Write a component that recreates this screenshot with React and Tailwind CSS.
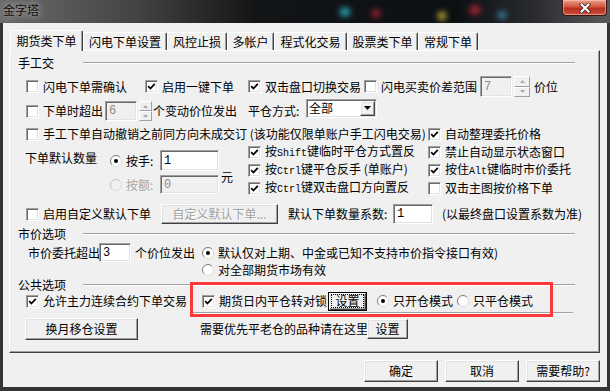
import React from "react";

const mono = "font-['Liberation_Mono',monospace] text-[10px]";
const sunken =
  "border border-t-[#a0a0a0] border-l-[#a0a0a0] border-r-white border-b-white shadow-[inset_1px_1px_0_#696969,inset_-1px_-1px_0_#e3e3e3]";
const raised =
  "border border-t-white border-l-white border-r-[#404040] border-b-[#404040] bg-[#f0f0f0] shadow-[inset_-1px_-1px_0_#a0a0a0,inset_1px_1px_0_#e3e3e3]";

function Box({ checked }) {
  return (
    <span className={`flex h-[13px] w-[13px] shrink-0 items-center justify-center bg-white ${sunken}`}>
      {checked && (
        <svg width="9" height="9" viewBox="0 0 9 9">
          <path d="M1.2 4.2 L3.4 6.5 L7.8 1.8" fill="none" stroke="#000" strokeWidth="1.8" />
        </svg>
      )}
    </span>
  );
}

function Check({ checked, children, className = "" }) {
  return (
    <div className={`flex shrink-0 items-center gap-[4px] whitespace-nowrap ${className}`}>
      <Box checked={checked} />
      <span>{children}</span>
    </div>
  );
}

function Dot({ checked, disabled }) {
  return (
    <svg width="12" height="12" viewBox="0 0 12 12" className="shrink-0">
      <circle cx="6" cy="6" r="5.5" fill={disabled ? "#f0f0f0" : "#fff"} />
      <path d="M2.1 9.9 A5.5 5.5 0 0 1 9.9 2.1" fill="none" stroke={disabled ? "#c4c4c4" : "#7a7a7a"} strokeWidth="1" />
      <path d="M9.9 2.1 A5.5 5.5 0 0 1 2.1 9.9" fill="none" stroke="#dcdcdc" strokeWidth="1" />
      {checked && <circle cx="6" cy="6" r="2" fill="#000" />}
    </svg>
  );
}

function Radio({ checked, children, className = "" }) {
  return (
    <div className={`flex shrink-0 items-center gap-[4px] whitespace-nowrap ${className}`}>
      <Dot checked={checked} />
      <span>{children}</span>
    </div>
  );
}

function Field({ value, disabled, className = "" }) {
  return (
    <div
      className={`flex shrink-0 items-center pl-[3px] font-['Liberation_Mono',monospace] text-[12px] ${sunken} ${
        disabled ? "bg-[#f0f0f0] text-[#8a8a8a]" : "bg-white text-black"
      } ${className}`}
    >
      {value}
    </div>
  );
}

function SpinHalf({ up }) {
  return (
    <div className="flex flex-1 items-center justify-center border border-t-white border-l-white border-r-[#a0a0a0] border-b-[#a0a0a0] bg-[#f0f0f0]">
      <svg width="5" height="3" viewBox="0 0 5 3">
        <path d={up ? "M0 3 L2.5 0 L5 3Z" : "M0 0 L2.5 3 L5 0Z"} fill="#a8a8a8" />
      </svg>
    </div>
  );
}

function Spin({ className = "" }) {
  return (
    <div className={`flex shrink-0 flex-col ${className}`}>
      <SpinHalf up />
      <SpinHalf />
    </div>
  );
}

function Button({ children, className = "", disabled }) {
  return (
    <div
      className={`flex shrink-0 items-center justify-center whitespace-nowrap ${raised} ${
        disabled ? "text-[#a0a0a0] [text-shadow:1px_1px_0_#fff]" : "text-black"
      } ${className}`}
    >
      {children}
    </div>
  );
}

function Group({ label, className = "" }) {
  return (
    <div className={`flex items-center pl-[8px] ${className}`}>
      <span className="w-[65px] shrink-0">{label}</span>
      <div className="h-[2px] w-[492px] border-t border-b border-t-[#a0a0a0] border-b-white" />
    </div>
  );
}

function Tab({ label, active, className = "" }) {
  if (active) {
    return (
      <div
        className={`relative z-10 -mb-[1px] flex h-[21px] items-center justify-center rounded-t-[2px] border-t border-l border-r border-t-white border-l-white border-r-[#404040] bg-[#f0f0f0] shadow-[inset_-1px_0_0_#a0a0a0] ${className}`}
      >
        {label}
      </div>
    );
  }
  return (
    <div
      className={`flex h-[18px] items-center justify-center rounded-t-[2px] border-t border-l border-r border-t-white border-l-white border-r-[#404040] bg-[#f0f0f0] shadow-[inset_-1px_0_0_#a0a0a0] ${className}`}
    >
      {label}
    </div>
  );
}

export default function App() {
  return (
    <div className="relative flex h-[391px] w-[610px] flex-col overflow-hidden whitespace-nowrap bg-[#343434] font-['Noto_Sans_CJK_SC',sans-serif] text-[12px] leading-[14px] text-black">
      {/* title bar */}
      <div className="relative flex h-[23px] shrink-0 bg-[linear-gradient(90deg,#6a6a6a_0%,#444_22%,#121416_42%,#0d1013_75%,#2a2c30_88%,#5a5a5a_100%)]">
        <span className="absolute left-[340px] top-[8px] h-[8px] w-[10px] rounded-full bg-[#2fb5c9] blur-[3px]" />
        <span className="absolute left-[372px] top-[10px] h-[7px] w-[8px] rounded-full bg-[#c22a3a] blur-[3px]" />
        <span className="absolute left-[438px] top-[12px] h-[8px] w-[8px] rounded-full bg-[#d8c040] blur-[3px]" />
        <span className="absolute left-[470px] top-[6px] h-[8px] w-[10px] rounded-full bg-[#c02838] blur-[3px]" />
        <span className="absolute left-[498px] top-[12px] h-[6px] w-[8px] rounded-full bg-[#4aa0d0] blur-[3px]" />
        <span className="relative pl-[3px] pt-[3px] text-[12px] text-[#111] [text-shadow:0_0_6px_#bbb,0_0_10px_#999]">
          金字塔
        </span>
        <div className="relative ml-auto mr-[3px] flex h-[16px] w-[45px] items-center justify-center rounded-b-[4px] border border-t-0 border-[#3a1410] bg-[linear-gradient(180deg,#e9a08c_0%,#d2553c_45%,#b8301f_55%,#c8503a_100%)] shadow-[inset_0_0_0_1px_rgba(255,210,200,0.5)]">
          <svg width="14" height="10" viewBox="0 0 14 10">
            <path d="M3.5 1.5 L10.5 8.5 M10.5 1.5 L3.5 8.5" stroke="#3a2a2a" strokeWidth="3.6" strokeLinecap="square" />
            <path d="M3.5 1.5 L10.5 8.5 M10.5 1.5 L3.5 8.5" stroke="#fff" strokeWidth="2" strokeLinecap="square" />
          </svg>
        </div>
      </div>

      {/* client area */}
      <div className="mx-[3px] flex h-[364px] w-[604px] shrink-0 flex-col bg-[#f0f0f0] pt-[7px]">
        <div className="flex h-[20px] items-end pl-[7px]">
          <Tab active label="期货类下单" className="w-[73px]" />
          <Tab label="闪电下单设置" className="w-[84px]" />
          <Tab label="风控止损" className="w-[60px]" />
          <Tab label="多帐户" className="w-[47px]" />
          <Tab label="程式化交易" className="w-[73px]" />
          <Tab label="股票类下单" className="w-[71px]" />
          <Tab label="常规下单" className="w-[60px]" />
        </div>

        <div className="ml-[6px] flex h-[303px] w-[591px] flex-col border border-t-white border-l-white border-r-[#404040] border-b-[#404040] shadow-[inset_-1px_-1px_0_#a0a0a0]">
          <Group label="手工交" className="mt-[5px] h-[14px]" />

          <div className="mt-[6px] flex h-[21px] items-center pl-[16px]">
            <Check className="w-[119px]">闪电下单需确认</Check>
            <Check checked className="w-[103px]">启用一键下单</Check>
            <Check checked className="w-[116px]">双击盘口切换交易</Check>
            <Check className="w-[116px]">闪电买卖价差范围</Check>
            <Field value="7" disabled className="h-[21px] w-[32px]" />
            <Spin className="ml-[2px] h-[21px] w-[16px]" />
            <span className="ml-[4px]">价位</span>
          </div>

          <div className="mt-[4px] flex h-[20px] items-center pl-[16px]">
            <Check className="w-[79px]">下单时超出</Check>
            <Field value="6" disabled className="h-[20px] w-[32px]" />
            <Spin className="ml-[2px] h-[20px] w-[13px]" />
            <span className="ml-[1px] w-[95px] shrink-0">个变动价位发出</span>
            <span className="w-[58px] shrink-0">平仓方式:</span>
            <div className={`-mt-[6px] flex h-[19px] w-[71px] shrink-0 items-center bg-white ${sunken}`}>
              <span className="flex-1 pl-[2px]">全部</span>
              <div className={`mr-[1px] flex h-[15px] w-[15px] items-center justify-center ${raised}`}>
                <svg width="7" height="4" viewBox="0 0 7 4">
                  <path d="M0 0 L3.5 4 L7 0Z" fill="#000" />
                </svg>
              </div>
            </div>
          </div>

          <div className="mt-[5px] flex h-[16px] items-center pl-[16px]">
            <Check className="w-[402px]">手工下单自动撤销之前同方向未成交订 (该功能仅限单账户手工闪电交易)</Check>
            <Check checked>自动整理委托价格</Check>
          </div>

          <div className="mt-[1px] flex h-[54px] pl-[15px]">
            <div className="flex w-[223px] shrink-0">
              <span className="mt-[8px] w-[85px] shrink-0">下单默认数量</span>
              <div className="flex flex-col gap-[4px] pt-[7px]">
                <div className="flex h-[21px] items-center">
                  <Radio checked className="w-[50px]">按手:</Radio>
                  <Field value="1" className="h-[21px] w-[59px]" />
                </div>
                <div className="flex h-[19px] items-center">
                  <div className="flex w-[50px] shrink-0 items-center gap-[4px] text-[#a8a8a8]">
                    <Dot disabled />
                    <span>按额:</span>
                  </div>
                  <Field value="0" disabled className="h-[19px] w-[59px]" />
                </div>
              </div>
              <span className="ml-[2px] mt-[27px]">元</span>
            </div>
            <div className="flex w-[180px] shrink-0 flex-col">
              <Check checked className="h-[18px]">按<span className={mono}>Shift</span>键临时平仓方式置反</Check>
              <Check checked className="h-[18px]">按<span className={mono}>Ctrl</span>键平仓反手 (单账户)</Check>
              <Check checked className="h-[18px]">按<span className={mono}>Ctrl</span>键双击盘口方向置反</Check>
            </div>
            <div className="flex flex-col">
              <Check checked className="h-[18px]">禁止自动显示状态窗口</Check>
              <Check checked className="h-[18px]">按住<span className={mono}>Alt</span>键临时市价委托</Check>
              <Check className="h-[18px]">双击主图按价格下单</Check>
            </div>
          </div>

          <div className="mt-[7px] flex h-[20px] items-center pl-[16px]">
            <Check className="w-[135px]">启用自定义默认下单</Check>
            <Button disabled className="h-[20px] w-[117px]">自定义默认下单...</Button>
            <span className="ml-[10px] w-[105px] shrink-0">默认下单数量系数:</span>
            <Field value="1" className="h-[20px] w-[40px]" />
            <span className="ml-[9px]">(以最终盘口设置系数为准)</span>
          </div>

          <Group label="市价选项" className="mt-[3px] h-[14px]" />

          <div className="mt-[2px] flex h-[19px] items-center pl-[18px]">
            <span className="w-[71px] shrink-0">市价委托超出</span>
            <Field value="3" className="h-[19px] w-[32px]" />
            <span className="ml-[4px] w-[67px] shrink-0">个价位发出</span>
            <Radio checked>默认仅对上期、中金或已知不支持市价指令接口有效)</Radio>
          </div>

          <div className="mt-[1px] flex h-[14px] items-center pl-[192px]">
            <Radio>对全部期货市场有效</Radio>
          </div>

          <Group label="公共选项" className="mt-[2px] h-[12px]" />

          <div className="flex h-[20px] items-center pl-[16px]">
            <Check checked className="w-[176px]">允许主力连续合约下单交易</Check>
            <Check checked className="w-[126px]">期货日内平仓转对锁</Check>
            <div className="flex h-[19px] w-[39px] shrink-0 border border-black">
              <div className={`flex flex-1 items-center justify-center ${raised}`}>
                <span className="border border-dotted border-black px-[3px] leading-[12px]">设置</span>
              </div>
            </div>
            <Radio checked className="ml-[10px] w-[80px]">只开仓模式</Radio>
            <Radio>只平仓模式</Radio>
          </div>

          <div className="ml-[183px] mt-[1px] h-[2px] w-[380px] border-t border-b border-t-[#a0a0a0] border-b-white" />

          <div className="mt-[4px] flex h-[22px] items-center pl-[15px]">
            <Button className="h-[22px] w-[113px]">换月移仓设置</Button>
            <span className="ml-[62px] w-[167px] shrink-0">需要优先平老仓的品种请在这里</span>
            <Button className="h-[20px] w-[41px]">设置</Button>
          </div>
        </div>

        <div className="mt-[7px] flex h-[22px] gap-[7px] pl-[361px]">
          <Button className="h-[22px] w-[74px]">确定</Button>
          <Button className="h-[22px] w-[74px]">取消</Button>
          <Button className="h-[22px] w-[74px]">需要帮助?</Button>
        </div>
      </div>

      {/* red annotation box drawn over the dialog */}
      <div className="pointer-events-none absolute left-[190px] top-[282px] h-[35px] w-[363px] border-[3px] border-[#f83a3a]" />
    </div>
  );
}
